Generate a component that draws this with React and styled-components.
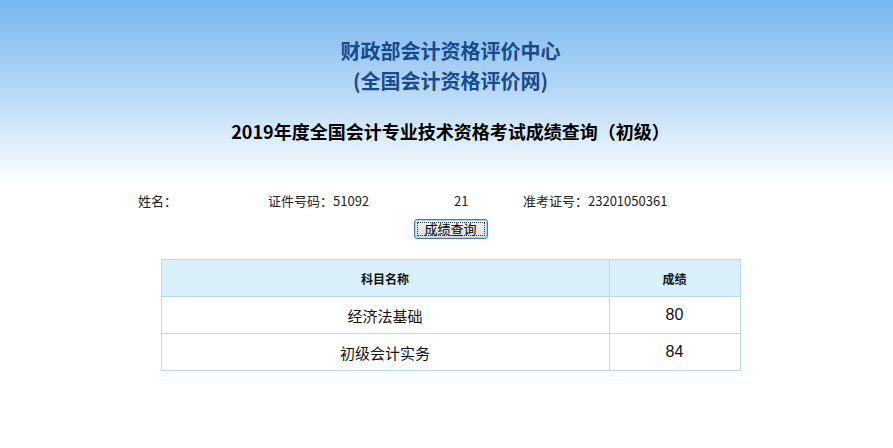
import React from 'react';
import styled, { createGlobalStyle } from 'styled-components';

const GlobalStyle = createGlobalStyle`
  html, body {
    margin: 0;
    padding: 0;
    background: #fff;
  }
  body {
    font-family: "Noto Sans CJK SC", "Noto Sans", sans-serif;
  }
`;

const Page = styled.div`
  width: 893px;
  height: 448px;
  box-sizing: border-box;
  padding-left: 8px;
  background: linear-gradient(to bottom, #78b6ee 0px, #b6d8f6 90px, #f4f9fe 170px, #ffffff 185px, #ffffff 100%);
  display: flex;
  flex-direction: column;
  align-items: center;
`;

const Header = styled.div`
  padding-top: 36px;
  display: flex;
  flex-direction: column;
  align-items: center;
`;

const OrgTitle = styled.div`
  font-size: 20px;
  font-weight: bold;
  color: #174a8e;
  line-height: 30px;
  text-align: center;
`;

const ExamTitle = styled.h1`
  margin: 22px 0 0;
  font-size: 18px;
  font-weight: bold;
  color: #000;
  line-height: 26px;
`;

const InfoRow = styled.div`
  margin-top: 48px;
  width: 600px;
  align-self: flex-start;
  margin-left: 130px;
  display: flex;
  font-size: 13px;
  color: #222;
  line-height: 18px;
`;

const Field = styled.span`
  width: ${p => p.w}px;
  white-space: nowrap;
`;

const Masked = styled.span`
  display: inline-block;
  width: ${p => p.w}px;
`;

const QueryButton = styled.button`
  margin-top: 9px;
  box-sizing: border-box;
  height: 20px;
  width: 74px;
  font-family: "Noto Sans CJK SC", sans-serif;
  font-size: 13px;
  line-height: 16px;
  padding: 0;
  color: #000;
  background: linear-gradient(to bottom, #f2f2f2, #dcdcdc);
  border: 1px solid #3c7fb1;
  border-radius: 3px;
  box-shadow: inset 0 0 0 1px #a6d8f4;
  outline: 1px dotted #333;
  outline-offset: -4px;
`;

const Table = styled.table`
  margin-top: 20px;
  width: 580px;
  border-collapse: collapse;
  border: 1px solid #b5dbef;
`;

const HeadCell = styled.th`
  background: #d9effa;
  border: 1px solid #b5dbef;
  height: 36px;
  padding: 0;
  font-size: 12px;
  font-weight: bold;
  color: #111;
  width: ${p => (p.narrow ? '130px' : 'auto')};
`;

const Cell = styled.td`
  border: 1px solid #b5dbef;
  height: 36px;
  padding: 0;
  text-align: center;
  color: #111;
  font-family: ${p => (p.num ? '"Liberation Sans", Arial, sans-serif' : '"Noto Sans CJK SC", sans-serif')};
  font-size: ${p => (p.num ? '16px' : '15px')};
`;

const scores = [
  { name: '经济法基础', score: 80 },
  { name: '初级会计实务', score: 84 },
];

export default function App() {
  return (
    <Page>
      <GlobalStyle />
      <Header>
        <OrgTitle>财政部会计资格评价中心</OrgTitle>
        <OrgTitle>(全国会计资格评价网)</OrgTitle>
        <ExamTitle>2019年度全国会计专业技术资格考试成绩查询（初级）</ExamTitle>
      </Header>
      <InfoRow>
        <Field w={130}>姓名：<Masked w={40} /></Field>
        <Field w={255}>证件号码：51092<Masked w={85} />21</Field>
        <Field w={170}>准考证号：23201050361</Field>
      </InfoRow>
      <QueryButton>成绩查询</QueryButton>
      <Table>
        <thead>
          <tr>
            <HeadCell>科目名称</HeadCell>
            <HeadCell narrow>成绩</HeadCell>
          </tr>
        </thead>
        <tbody>
          {scores.map(s => (
            <tr key={s.name}>
              <Cell>{s.name}</Cell>
              <Cell num>{s.score}</Cell>
            </tr>
          ))}
        </tbody>
      </Table>
    </Page>
  );
}
